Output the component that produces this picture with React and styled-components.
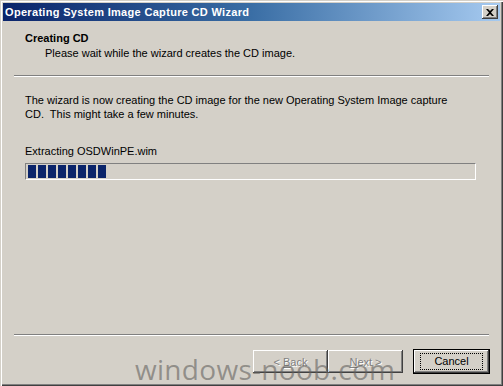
import React from "react";
import styled, { createGlobalStyle } from "styled-components";

const GlobalStyle = createGlobalStyle`
  html, body {
    margin: 0;
    padding: 0;
    background: #d4d0c8;
  }
  body {
    font-family: "Liberation Sans", Arial, sans-serif;
    font-size: 11px;
    color: #000;
  }
`;

const Window = styled.div`
  position: relative;
  width: 503px;
  height: 386px;
  box-sizing: border-box;
  background: #d4d0c8;
  padding: 3px;
  display: flex;
  flex-direction: column;
  overflow: hidden;
  box-shadow: inset 1px 1px 0 #d4d0c8, inset 2px 2px 0 #ffffff,
    inset -1px -1px 0 #404040, inset -2px -2px 0 #808080;
`;

const TitleBar = styled.div`
  height: 18px;
  display: flex;
  align-items: center;
  justify-content: space-between;
  padding: 0 2px 0 2px;
  background: linear-gradient(to right, #0a246a 0%, #3a6ea5 50%, #a6caf0 100%);
`;

const Title = styled.span`
  color: #fff;
  font-weight: bold;
  font-size: 11px;
  letter-spacing: 0.32px;
`;

const CloseButton = styled.div`
  width: 16px;
  height: 14px;
  box-sizing: border-box;
  background: #d4d0c8;
  display: flex;
  align-items: center;
  justify-content: center;
  box-shadow: inset -1px -1px 0 #404040, inset 1px 1px 0 #fff,
    inset -2px -2px 0 #808080;
`;

const Header = styled.div`
  height: 54px;
  padding: 10px 0 0 22px;
  box-sizing: border-box;
`;

const HeaderTitle = styled.div`
  font-weight: bold;
  line-height: 14px;
`;

const HeaderSub = styled.div`
  padding-left: 20px;
  line-height: 14px;
  margin-top: 1px;
`;

const Separator = styled.div`
  margin: 0 11px;
  height: 0;
  border-top: 1px solid #808080;
  border-bottom: 1px solid #ffffff;
`;

const Body = styled.div`
  flex: 1;
  padding: 16px 0 0 22px;
`;

const Paragraph = styled.p`
  margin: 0;
  width: 440px;
  line-height: 14px;
`;

const Status = styled.div`
  margin-top: 23px;
  line-height: 14px;
`;

const ProgressTrack = styled.div`
  margin-top: 5px;
  width: 451px;
  height: 17px;
  box-sizing: border-box;
  border-top: 1px solid #808080;
  border-left: 1px solid #808080;
  border-bottom: 1px solid #ffffff;
  border-right: 1px solid #ffffff;
  padding: 1px 2px;
  display: flex;
  gap: 2px;
`;

const Block = styled.div`
  width: 8px;
  height: 13px;
  background: #0a246a;
`;

const Footer = styled.div`
  height: 47px;
  display: flex;
  align-items: flex-start;
  padding: 14px 10px 0 0;
  box-sizing: border-box;
  justify-content: flex-end;
`;

const Button = styled.button`
  font: inherit;
  width: ${(p) => (p.$default ? "77px" : "75px")};
  height: ${(p) => (p.$default ? "25px" : "23px")};
  margin-top: ${(p) => (p.$default ? "-1px" : "0")};
  margin-left: ${(p) => p.$gap || 0}px;
  padding: 0;
  background: #d4d0c8;
  color: ${(p) => (p.disabled ? "#808080" : "#000")};
  text-shadow: ${(p) => (p.disabled ? "1px 1px 0 #fff" : "none")};
  border: ${(p) => (p.$default ? "1px solid #000" : "none")};
  box-shadow: inset -1px -1px 0 #404040, inset 1px 1px 0 #fff,
    inset -2px -2px 0 #808080;
  display: flex;
  align-items: center;
  justify-content: center;
`;

const Label = styled.span`
  white-space: pre;
`;

const FocusRing = styled.span`
  border: 1px dotted #000;
  padding: 1px 13px;
  line-height: 13px;
`;

const Watermark = styled.div`
  position: absolute;
  left: 135px;
  top: 350px;
  font-family: "Open Sans", "DejaVu Sans", sans-serif;
  font-size: 28px;
  color: rgba(100, 98, 95, 0.6);
  letter-spacing: 0.3px;
  pointer-events: none;
`;

const blocks = Array.from({ length: 8 });

export default function App() {
  return (
    <>
      <GlobalStyle />
      <Window>
        <TitleBar>
          <Title>Operating System Image Capture CD Wizard</Title>
          <CloseButton>
            <svg width="8" height="7" viewBox="0 0 8 7">
              <path d="M0 0h2l2 2 2-2h2L5 3.5 8 7H6L4 5 2 7H0l3-3.5z" fill="#000" />
            </svg>
          </CloseButton>
        </TitleBar>
        <Header>
          <HeaderTitle>Creating CD</HeaderTitle>
          <HeaderSub>Please wait while the wizard creates the CD image.</HeaderSub>
        </Header>
        <Separator />
        <Body>
          <Paragraph>
            The wizard is now creating the CD image for the new Operating System
            Image capture CD.&nbsp; This might take a few minutes.
          </Paragraph>
          <Status>Extracting OSDWinPE.wim</Status>
          <ProgressTrack>
            {blocks.map((_, i) => (
              <Block key={i} />
            ))}
          </ProgressTrack>
        </Body>
        <Separator />
        <Footer>
          <Button disabled>
            <Label>
              {"< "}
              <u>B</u>ack
            </Label>
          </Button>
          <Button disabled>
            <Label>
              <u>N</u>
              {"ext >"}
            </Label>
          </Button>
          <Button $default $gap={10}>
            <FocusRing>Cancel</FocusRing>
          </Button>
        </Footer>
        <Watermark>windows-noob.com</Watermark>
      </Window>
    </>
  );
}
